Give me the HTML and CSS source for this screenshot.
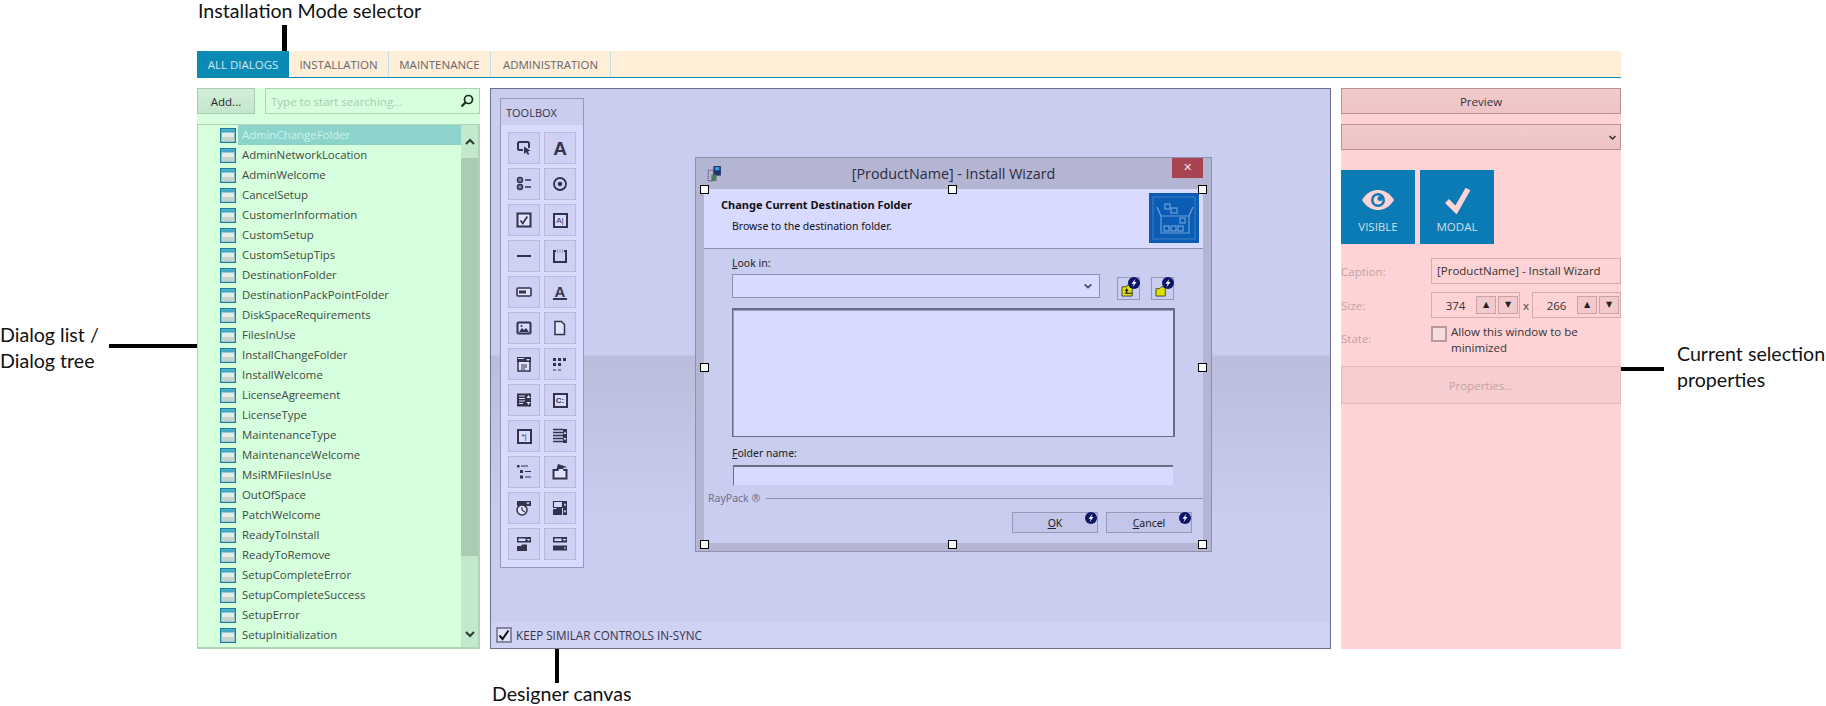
FILE: index.html
```html
<!DOCTYPE html>
<html lang="en">
<head>
<meta charset="utf-8">
<title>RayPack Dialog Designer</title>
<link rel="stylesheet" href="styles.css">
</head>
<body>
<svg class="sprite" width="0" height="0">
  <symbol id="dlg" viewBox="0 0 16 15"><rect x=".75" y=".75" width="14.5" height="13.5" fill="#e3ece6" stroke="#17809f" stroke-width="1.5"/><rect x="1.5" y="1.5" width="13" height="3" fill="#3fa7c6"/><rect x="1.5" y="9" width="13" height="4.5" fill="#c4d4cb"/></symbol>
  <symbol id="t1" viewBox="0 0 16 16"><path d="M13 8V3.500Q13 2 11.500 2h-8Q2 2 2 3.500v5Q2 10 3.500 10H7" fill="none" stroke="#33334d" stroke-width="2"/><path d="M8 6.500l6.500 4.300-2.700.8 1.500 2.700-1.500.8-1.500-2.800-2.300 1.800z" fill="#33334d"/></symbol>
  <symbol id="t3" viewBox="0 0 16 16"><circle cx="4" cy="4" r="2.500" fill="#8b8ba8" stroke="#33334d" stroke-width="1.500"/><circle cx="4" cy="11" r="2.500" fill="#8b8ba8" stroke="#33334d" stroke-width="1.500"/><path d="M9 4h6M9 11h6" stroke="#33334d" stroke-width="1.300"/></symbol>
  <symbol id="t4" viewBox="0 0 16 16"><circle cx="8" cy="8" r="6" fill="none" stroke="#33334d" stroke-width="1.800"/><circle cx="8" cy="8" r="2.300" fill="#33334d"/></symbol>
  <symbol id="t5" viewBox="0 0 16 16"><rect x="1.500" y="1.500" width="13" height="13" fill="#e3e4fb" stroke="#33334d" stroke-width="2"/><path d="M4.500 8.500l2.300 3 4.500-7" fill="none" stroke="#33334d" stroke-width="1.700"/></symbol>
  <symbol id="t7" viewBox="0 0 16 16"><path d="M1 8h14" stroke="#33334d" stroke-width="2"/></symbol>
  <symbol id="t8" viewBox="0 0 16 16"><path d="M4 3H2v11h12V3h-2" fill="none" stroke="#33334d" stroke-width="2"/><path d="M5 2h1M7.500 2h1M10 2h1M5 4h1M7.500 4h1M10 4h1" stroke="#66667f"/></symbol>
  <symbol id="t9" viewBox="0 0 16 16"><rect x="1" y="4" width="14" height="8" rx="1" fill="#e3e4fb" stroke="#33334d" stroke-width="1.600"/><rect x="3" y="6.500" width="7" height="3" fill="#33334d"/></symbol>
  <symbol id="t11" viewBox="0 0 16 16"><rect x="1.500" y="2.500" width="13" height="11" rx="1" fill="#d8daff" stroke="#33334d" stroke-width="2"/><path d="M3 12l3-4 2 2 2-2 3 4z" fill="#33334d"/><circle cx="5.500" cy="6" r="1" fill="#33334d"/></symbol>
  <symbol id="t12" viewBox="0 0 16 16"><path d="M3 1.500h6.500l3 3v10H3z" fill="#e3e4fb" stroke="#33334d" stroke-width="1.500"/></symbol>
  <symbol id="t13" viewBox="0 0 16 16"><path d="M1 1h14v5H1z" fill="#33334d"/><path d="M10 3h4l-2 2z" fill="#d8daff"/><path d="M2 2.500h6" stroke="#d8daff"/><path d="M2 6v9h12V6" fill="#e3e4fb" stroke="#33334d" stroke-width="1.500"/><path d="M5 9h6M5 11h6M5 13h4" stroke="#33334d"/></symbol>
  <symbol id="t14" viewBox="0 0 16 16"><path d="M1 2h3v3H1zM6 2h3v3H6zM11 2h3v3h-3zM1 7h3v3H1zM6 7h3v3H6z" fill="#33334d"/><path d="M1 14h3M6 14h3" stroke="#33334d"/></symbol>
  <symbol id="t15" viewBox="0 0 16 16"><rect x="1" y="1.500" width="14" height="13" fill="#33334d"/><path d="M3 4h6M3 6.500h6M3 9h6M3 11.500h4" stroke="#e3e4fb" stroke-width="1.200"/><path d="M10.500 6h4l-2-3zM10.500 10h4l-2 3z" fill="#e3e4fb"/></symbol>
  <symbol id="t18" viewBox="0 0 16 16"><path d="M1 1.500h10M1 4.500h10M1 7.500h10M1 10.500h10M1 13.500h10" stroke="#33334d" stroke-width="1.400"/><path d="M11 1h4v14h-4z" fill="#33334d"/><path d="M11.500 6h3L13 3.500zM11.500 10h3L13 12.500z" fill="#e3e4fb"/></symbol>
  <symbol id="t19" viewBox="0 0 16 16"><path d="M1 1h2.500v2.500H1zM4 6h3v3H4zM4 11.500h3v3H4z" fill="#33334d"/><path d="M5 2h7M9 7.500h6M9 13h6" stroke="#33334d" stroke-width="1.200"/></symbol>
  <symbol id="t20" viewBox="0 0 16 16"><path d="M1.500 6h13v8.500h-13z" fill="#e3e4fb" stroke="#33334d" stroke-width="2"/><path d="M6 0l9 3-4 1 1 3H4z" fill="#33334d"/><path d="M7 5L4.500 13h8L11 5z" fill="#e3e4fb"/></symbol>
  <symbol id="t21" viewBox="0 0 16 16"><rect x="1" y="1" width="14" height="5" fill="#33334d"/><path d="M10 2.500h4l-2 2z" fill="#d8daff"/><circle cx="6" cy="10" r="5" fill="#e3e4fb" stroke="#33334d" stroke-width="1.500"/><path d="M6 10V7M6 10l3 2" stroke="#33334d" stroke-width="1.200"/></symbol>
  <symbol id="t22" viewBox="0 0 16 16"><path d="M1.500 1.500h9v6h-9z" fill="#d8daff" stroke="#33334d" stroke-width="1.200"/><path d="M1 9h3l1-1.500h5V15H1z" fill="#33334d"/><rect x="11" y="1" width="4" height="14" fill="#33334d"/><path d="M11.700 5.500h2.600L13 3zM11.700 10.500h2.600L13 13z" fill="#e3e4fb"/></symbol>
  <symbol id="t23" viewBox="0 0 16 16"><rect x="1" y="1" width="14" height="5.500" fill="#33334d"/><rect x="2.500" y="2.500" width="7" height="2.500" fill="#d8daff"/><path d="M10.500 3h4l-2 2z" fill="#d8daff"/><path d="M1 10h4l1-1.500h5V15H1z" fill="#33334d"/></symbol>
  <symbol id="t24" viewBox="0 0 16 16"><rect x="1" y="1" width="14" height="5.500" fill="#33334d"/><rect x="2.500" y="2.500" width="7" height="2.500" fill="#d8daff"/><path d="M10.500 3h4l-2 2z" fill="#d8daff"/><rect x="1" y="9.500" width="14" height="5" fill="#33334d"/><path d="M12.500 11h1v2h-1z" fill="#d8daff"/></symbol>
  <symbol id="bolt" viewBox="0 0 12 12"><circle cx="6" cy="6" r="6" fill="#0c1468"/><path d="M7.500 1.800L3.500 6.800h2.200L4.500 10.300l4-5.300H6.300z" fill="#fff"/></symbol>
  <symbol id="chev" viewBox="0 0 12 12"><path d="M2 4l4 4 4-4" fill="none" stroke="currentColor" stroke-width="2"/></symbol>
</svg>

<div class="page">
  <nav class="tabs">
    <span class="tab tab-active">ALL DIALOGS</span>
    <span class="tab tab-install">INSTALLATION</span>
    <span class="tab tab-maint">MAINTENANCE</span>
    <span class="tab tab-admin">ADMINISTRATION</span>
  </nav>

  <main class="columns">
    <section class="left">
      <div class="left-top">
        <button class="add">Add...</button>
        <div class="search">
          <span class="search-ph">Type to start searching...</span>
          <svg class="search-ico" viewBox="0 0 14 14"><circle cx="8.500" cy="5.500" r="4" fill="none" stroke="#1c2a22" stroke-width="1.700"/><path d="M5.500 8.500L1.500 12.500" stroke="#1c2a22" stroke-width="2.200"/></svg>
        </div>
      </div>
      <div class="tree">
        <ul class="rows">
          <li class="row row-sel"><svg class="row-ico"><use href="#dlg"/></svg><span class="row-text">AdminChangeFolder</span></li>
          <li class="row"><svg class="row-ico"><use href="#dlg"/></svg><span class="row-text">AdminNetworkLocation</span></li>
          <li class="row"><svg class="row-ico"><use href="#dlg"/></svg><span class="row-text">AdminWelcome</span></li>
          <li class="row"><svg class="row-ico"><use href="#dlg"/></svg><span class="row-text">CancelSetup</span></li>
          <li class="row"><svg class="row-ico"><use href="#dlg"/></svg><span class="row-text">CustomerInformation</span></li>
          <li class="row"><svg class="row-ico"><use href="#dlg"/></svg><span class="row-text">CustomSetup</span></li>
          <li class="row"><svg class="row-ico"><use href="#dlg"/></svg><span class="row-text">CustomSetupTips</span></li>
          <li class="row"><svg class="row-ico"><use href="#dlg"/></svg><span class="row-text">DestinationFolder</span></li>
          <li class="row"><svg class="row-ico"><use href="#dlg"/></svg><span class="row-text">DestinationPackPointFolder</span></li>
          <li class="row"><svg class="row-ico"><use href="#dlg"/></svg><span class="row-text">DiskSpaceRequirements</span></li>
          <li class="row"><svg class="row-ico"><use href="#dlg"/></svg><span class="row-text">FilesInUse</span></li>
          <li class="row"><svg class="row-ico"><use href="#dlg"/></svg><span class="row-text">InstallChangeFolder</span></li>
          <li class="row"><svg class="row-ico"><use href="#dlg"/></svg><span class="row-text">InstallWelcome</span></li>
          <li class="row"><svg class="row-ico"><use href="#dlg"/></svg><span class="row-text">LicenseAgreement</span></li>
          <li class="row"><svg class="row-ico"><use href="#dlg"/></svg><span class="row-text">LicenseType</span></li>
          <li class="row"><svg class="row-ico"><use href="#dlg"/></svg><span class="row-text">MaintenanceType</span></li>
          <li class="row"><svg class="row-ico"><use href="#dlg"/></svg><span class="row-text">MaintenanceWelcome</span></li>
          <li class="row"><svg class="row-ico"><use href="#dlg"/></svg><span class="row-text">MsiRMFilesInUse</span></li>
          <li class="row"><svg class="row-ico"><use href="#dlg"/></svg><span class="row-text">OutOfSpace</span></li>
          <li class="row"><svg class="row-ico"><use href="#dlg"/></svg><span class="row-text">PatchWelcome</span></li>
          <li class="row"><svg class="row-ico"><use href="#dlg"/></svg><span class="row-text">ReadyToInstall</span></li>
          <li class="row"><svg class="row-ico"><use href="#dlg"/></svg><span class="row-text">ReadyToRemove</span></li>
          <li class="row"><svg class="row-ico"><use href="#dlg"/></svg><span class="row-text">SetupCompleteError</span></li>
          <li class="row"><svg class="row-ico"><use href="#dlg"/></svg><span class="row-text">SetupCompleteSuccess</span></li>
          <li class="row"><svg class="row-ico"><use href="#dlg"/></svg><span class="row-text">SetupError</span></li>
          <li class="row"><svg class="row-ico"><use href="#dlg"/></svg><span class="row-text">SetupInitialization</span></li>
        </ul>
        <div class="scrollbar">
          <div class="sb-btn"><svg class="sb-chev sb-up"><use href="#chev"/></svg></div>
          <div class="sb-thumb"></div>
          <div class="sb-rest"><svg class="sb-chev"><use href="#chev"/></svg></div>
        </div>
      </div>
    </section>

    <section class="canvas">
      <div class="canvas-main">
        <aside class="toolbox">
          <div class="toolbox-title">TOOLBOX</div>
          <div class="tools">
            <div class="tool"><svg class="tool-ico"><use href="#t1"/></svg></div>
            <div class="tool"><span class="glyph-a">A</span></div>
            <div class="tool"><svg class="tool-ico"><use href="#t3"/></svg></div>
            <div class="tool"><svg class="tool-ico"><use href="#t4"/></svg></div>
            <div class="tool"><svg class="tool-ico"><use href="#t5"/></svg></div>
            <div class="tool"><span class="glyph-box">A|</span></div>
            <div class="tool"><svg class="tool-ico"><use href="#t7"/></svg></div>
            <div class="tool"><svg class="tool-ico"><use href="#t8"/></svg></div>
            <div class="tool"><svg class="tool-ico"><use href="#t9"/></svg></div>
            <div class="tool"><span class="glyph-link">A</span></div>
            <div class="tool"><svg class="tool-ico"><use href="#t11"/></svg></div>
            <div class="tool"><svg class="tool-ico"><use href="#t12"/></svg></div>
            <div class="tool"><svg class="tool-ico"><use href="#t13"/></svg></div>
            <div class="tool"><svg class="tool-ico"><use href="#t14"/></svg></div>
            <div class="tool"><svg class="tool-ico"><use href="#t15"/></svg></div>
            <div class="tool"><span class="glyph-box glyph-bold">C:</span></div>
            <div class="tool"><span class="glyph-box">*|</span></div>
            <div class="tool"><svg class="tool-ico"><use href="#t18"/></svg></div>
            <div class="tool"><svg class="tool-ico"><use href="#t19"/></svg></div>
            <div class="tool"><svg class="tool-ico"><use href="#t20"/></svg></div>
            <div class="tool"><svg class="tool-ico"><use href="#t21"/></svg></div>
            <div class="tool"><svg class="tool-ico"><use href="#t22"/></svg></div>
            <div class="tool"><svg class="tool-ico"><use href="#t23"/></svg></div>
            <div class="tool"><svg class="tool-ico"><use href="#t24"/></svg></div>
          </div>
        </aside>

        <div class="dialog">
          <header class="dlg-title">
            <svg class="dlg-app" viewBox="0 0 16 16"><path d="M7 1h7v9H7z" fill="#22306a"/><path d="M8.500 2h4v3h-4z" fill="#27a3e6"/><path d="M2 5h5v10H2z" fill="none" stroke="#33334d" stroke-dasharray="1 1"/><path d="M5 9h5v6H5z" fill="#4d7a60"/></svg>
            <span class="dlg-caption">[ProductName] - Install Wizard</span>
            <span class="dlg-close">✕</span>
          </header>
          <div class="dlg-body">
            <div class="dlg-head">
              <div class="dlg-head-text">
                <div class="dlg-h1">Change Current Destination Folder</div>
                <div class="dlg-h2">Browse to the destination folder.</div>
              </div>
              <svg class="dlg-logo" viewBox="0 0 50 50">
                <rect width="50" height="50" fill="#0b5cb5"/>
                <rect x="4" y="4" width="42" height="42" fill="none" stroke="#3c7fc8"/>
                <g fill="none" stroke="#6f9fd8" stroke-width="1.200">
                  <path d="M8 14l4 9v17h28V23l4-9M12 23h28"/>
                  <rect x="16" y="11" width="5" height="5"/><rect x="22" y="15" width="6" height="5"/>
                  <rect x="31" y="25" width="5" height="5"/><rect x="15" y="33" width="5" height="5"/><rect x="22" y="33" width="5" height="5"/><rect x="29" y="33" width="5" height="5"/>
                </g>
              </svg>
            </div>
            <div class="dlg-form">
              <label class="dlg-label"><u>L</u>ook in:</label>
              <div class="look-row">
                <div class="dlg-combo"><svg class="dlg-chev"><use href="#chev"/></svg></div>
                <div class="dlg-icon-btn">
                  <svg class="folder" viewBox="0 0 16 14"><path d="M1 3h5l1-2h5v12H1z" fill="#dfe000" stroke="#222" stroke-width=".8"/><path d="M4 10h8M6 10V6M4.500 7.500L6 5.500l1.500 2" fill="none" stroke="#111" stroke-width="1.200"/></svg>
                  <svg class="bolt"><use href="#bolt"/></svg>
                </div>
                <div class="dlg-icon-btn">
                  <svg class="folder" viewBox="0 0 16 14"><path d="M1 5h4l2-2h4v10H1z" fill="#dfe000" stroke="#222" stroke-width=".8"/></svg>
                  <svg class="bolt"><use href="#bolt"/></svg>
                </div>
              </div>
              <div class="dlg-listbox"></div>
              <label class="dlg-label dlg-label-folder"><u>F</u>older name:</label>
              <div class="dlg-input"></div>
            </div>
            <div class="raypack"><span class="raypack-text">RayPack ®</span><span class="raypack-line"></span></div>
            <div class="dlg-actions">
              <div class="dlg-btn"><span><u>O</u>K</span><svg class="bolt bolt-btn"><use href="#bolt"/></svg></div>
              <div class="dlg-btn"><span><u>C</u>ancel</span><svg class="bolt bolt-btn"><use href="#bolt"/></svg></div>
            </div>
          </div>
          <i class="handle h-tl"></i><i class="handle h-tc"></i><i class="handle h-tr"></i>
          <i class="handle h-ml"></i><i class="handle h-mr"></i>
          <i class="handle h-bl"></i><i class="handle h-bc"></i><i class="handle h-br"></i>
        </div>
      </div>
      <div class="sync">
        <span class="sync-check"><svg viewBox="0 0 12 12"><path d="M1.500 6.500l3 3.500 6-8.500" fill="none" stroke="#111" stroke-width="2"/></svg></span>
        <span class="sync-text">KEEP SIMILAR CONTROLS IN-SYNC</span>
      </div>
    </section>

    <section class="right">
      <button class="preview">Preview</button>
      <div class="right-select"><svg class="right-chev"><use href="#chev"/></svg></div>
      <div class="tiles">
        <div class="tile">
          <svg class="tile-ico" viewBox="0 0 34 24"><path d="M1 12C6 4 12 2 17 2s11 2 16 10c-5 8-11 10-16 10S6 20 1 12z" fill="#ffd3d5"/><circle cx="17" cy="12" r="7" fill="#0a7bb4"/><circle cx="17" cy="12" r="4.500" fill="#ffd3d5"/><circle cx="19" cy="10.500" r="2.500" fill="#0a7bb4"/></svg>
          <span class="tile-text">VISIBLE</span>
        </div>
        <div class="tile">
          <svg class="tile-ico" viewBox="0 0 34 28"><path d="M7 15l9 9L28 3" fill="none" stroke="#ffd3d5" stroke-width="5.500"/></svg>
          <span class="tile-text">MODAL</span>
        </div>
      </div>
      <div class="props">
        <span class="prop-label">Caption:</span>
        <div class="prop-input">[ProductName] - Install Wizard</div>
        <span class="prop-label">Size:</span>
        <div class="size-row">
          <div class="spin"><span class="spin-val">374</span><span class="spin-btn">▲</span><span class="spin-btn">▼</span></div>
          <span class="size-x">x</span>
          <div class="spin"><span class="spin-val">266</span><span class="spin-btn">▲</span><span class="spin-btn">▼</span></div>
        </div>
        <span class="prop-label prop-label-state">State:</span>
        <div class="state">
          <span class="state-box"></span>
          <span class="state-text">Allow this window to be minimized</span>
        </div>
      </div>
      <button class="properties">Properties...</button>
    </section>
  </main>

  <div class="note note-top">Installation Mode selector</div>
  <i class="bar bar-top"></i>
  <div class="note note-left">Dialog list /<br>Dialog tree</div>
  <i class="bar bar-left"></i>
  <div class="note note-right">Current selection<br>properties</div>
  <i class="bar bar-right"></i>
  <div class="note note-bottom">Designer canvas</div>
  <i class="bar bar-bottom"></i>
</div>
</body>
</html>
```
FILE: styles.css
```css
* { box-sizing: border-box; }
html, body { margin: 0; padding: 0; background: #fff; }
body { font-family: "Open Sans", "Liberation Sans", sans-serif; font-size: 11.5px; color: #333; }
.sprite { position: absolute; }
.page { position: relative; width: 1826px; height: 706px; overflow: hidden; padding: 51px 205px 0 197px; }

/* tabs */
.tabs { display: flex; height: 27px; background: #ffeed8; border-bottom: 1px solid #0a8ab5; }
.tab { display: flex; align-items: center; justify-content: center; color: #66666a; font-size: 11.5px; border-right: 1px solid #c6dde0; }
.tab-active { width: 92px; background: #0a8ab5; color: #cfe8f2; border-right: 0; }
.tab-install { width: 100px; }
.tab-maint { width: 102px; }
.tab-admin { width: 120px; }

.columns { display: flex; gap: 10px; margin-top: 10px; height: 561px; }

/* left */
.left { width: 283px; display: flex; flex-direction: column; background: #d5ffdd; }
.left-top { display: flex; gap: 10px; height: 26px; flex: none; }
.add { width: 58px; height: 26px; padding: 0; border: 1px solid #a8ccb0; background: linear-gradient(#d3eeda, #c4e6cc); font: inherit; color: #2a2a2a; }
.search { flex: 1; display: flex; align-items: center; justify-content: space-between; padding: 0 5px; border: 1px solid #aed2b7; }
.search-ph { color: #aacab3; }
.search-ico { width: 14px; height: 14px; }
.tree { display: flex; margin-top: 10px; height: 525px; border: 1px solid #aed5b6; border-width: 1px 2px 2px 1px; }
.rows { list-style: none; margin: 0; padding: 0; flex: 1; overflow: hidden; }
.row { display: flex; align-items: center; height: 20px; padding-left: 22px; color: #3d4a42; font-size: 11.4px; }
.row-ico { width: 16px; height: 15px; flex: none; }
.row-text { flex: 1; height: 20px; line-height: 20px; margin-left: 2px; padding-left: 4px; }
.row-sel .row-text { background: #8cd3cb; color: #cdf3ea; }
.scrollbar { width: 17px; display: flex; flex-direction: column; background: #c3e8cc; }
.sb-btn { height: 33px; display: flex; align-items: center; justify-content: center; }
.sb-thumb { height: 398px; background: #abcbb2; }
.sb-rest { flex: 1; display: flex; align-items: flex-end; justify-content: center; padding-bottom: 7px; }
.sb-chev { width: 12px; height: 12px; color: #2a3a30; }
.sb-up { transform: rotate(180deg); }

/* canvas */
.canvas { width: 841px; display: flex; flex-direction: column; border: 1px solid #6f6f8a; background: linear-gradient(#c9cdef 0, #c9cdef 266px, #babddc 267px, #c9cdef 430px); }
.canvas-main { flex: 1; display: flex; align-items: flex-start; padding: 9px 0 0 9px; }
.sync { display: flex; align-items: center; gap: 4px; height: 26px; padding-left: 5px; background: #cfd2f3; }
.sync-check { width: 16px; height: 16px; border: 2px solid #85869f; background: #e2e3fb; display: flex; }
.sync-check svg { width: 12px; height: 12px; }
.sync-text { color: #33334d; font-size: 11.7px; }

.toolbox { width: 84px; height: 470px; border: 1px solid #9698b4; background: #d8daff; }
.toolbox-title { height: 26px; line-height: 27px; padding-left: 5px; background: #cacdee; color: #33334d; font-size: 11px; }
.tools { display: grid; grid-template-columns: 32px 32px; gap: 4px; padding: 7px 0 0 7px; }
.tool { width: 32px; height: 32px; border: 1px solid #b8bad8; display: flex; align-items: center; justify-content: center; background: #ced1f4; }
.tool-ico { width: 16px; height: 16px; }
.glyph-a { font: bold 19px/1 "Liberation Sans", sans-serif; color: #33334d; }
.glyph-link { font: bold 15px/13px "Liberation Sans", sans-serif; color: #33334d; border-bottom: 2px solid #33334d; padding: 0 2px; }
.glyph-box { width: 15px; height: 15px; border: 2px solid #33334d; background: #d8daff; font: 8px/11px "Liberation Sans", sans-serif; text-align: center; color: #33334d; }
.glyph-bold { font-weight: 700; }

/* dialog */
.dialog { position: relative; width: 517px; height: 395px; margin: 59px 0 0 111px; border: 1px solid #8e90ad; background: #b3b5d2; padding: 0 8px 8px; display: flex; flex-direction: column; font-family: "Noto Sans", sans-serif; color: #111; }
.dlg-title { position: relative; height: 31px; flex: none; margin: 0 -8px; display: flex; justify-content: center; padding-top: 5px; }
.dlg-app { position: absolute; left: 10px; top: 7px; width: 17px; height: 17px; }
.dlg-caption { font: 14.3px/22px "Open Sans", sans-serif; color: #2b2b3f; }
.dlg-close { position: absolute; right: 8px; top: 0; width: 31px; height: 20px; background: #a84452; color: #f3dfe4; font: 11px/20px "DejaVu Sans", sans-serif; text-align: center; }
.dlg-body { flex: 1; background: #c9cdef; display: flex; flex-direction: column; min-height: 0; }
.dlg-head { height: 60px; flex: none; display: flex; justify-content: space-between; align-items: center; background: #d8daff; border-bottom: 1px solid #8e90ad; padding: 0 4px 1px 17px; }
.dlg-head-text { margin-top: -5px; }
.dlg-h1 { font-weight: 700; font-size: 11px; line-height: 15px; }
.dlg-h2 { font-size: 10.5px; line-height: 15px; padding: 7px 0 0 11px; }
.dlg-logo { width: 50px; height: 50px; }
.dlg-form { padding: 6px 29px 0 28px; flex: none; }
.dlg-label { display: block; font-size: 10.5px; line-height: 16px; color: #222; }
.look-row { display: flex; align-items: flex-start; margin-top: 3px; }
.dlg-combo { width: 369px; height: 24px; background: #d8daff; border: 1px solid #8e90ad; display: flex; align-items: center; justify-content: flex-end; padding-right: 6px; }
.dlg-chev { width: 10px; height: 10px; color: #4a4a60; }
.dlg-icon-btn { position: relative; width: 23px; height: 23px; margin: 3px 0 0 17px; border: 1px solid #9698b4; display: flex; align-items: flex-end; padding: 0 0 2px 3px; }
.dlg-icon-btn + .dlg-icon-btn { margin-left: 11px; }
.folder { width: 15px; height: 13px; }
.bolt { position: absolute; right: -1px; top: -1px; width: 12px; height: 12px; }
.dlg-listbox { width: 443px; height: 129px; margin-top: 8px; background: #d8daff; border: 2px solid #6b6b85; border-width: 2px 2px 1px 1px; box-shadow: inset 1px 1px 0 #9c9db9; }
.dlg-label-folder { margin-top: 8px; }
.dlg-input { width: 440px; height: 20px; margin: 4px 0 0 1px; background: #d8daff; border: 2px solid #6d6d85; border-width: 2px 0 0 1px; }
.raypack { display: flex; align-items: center; gap: 6px; margin-top: 4px; padding-left: 4px; flex: none; }
.raypack-text { color: #70708a; font-size: 10.5px; line-height: 18px; }
.raypack-line { flex: 1; height: 1px; background: #8e90ad; }
.dlg-actions { display: flex; justify-content: flex-end; gap: 8px; padding: 5px 11px 0 0; flex: none; }
.dlg-btn { position: relative; width: 86px; height: 21px; border: 1px solid #9698b4; background: #c3c6ea; font-size: 10.5px; display: flex; align-items: center; justify-content: center; color: #222; }
.bolt-btn { right: 0; top: -1px; }
.handle { position: absolute; width: 9px; height: 9px; background: #fff; border: 1px solid #000; }
.h-tl { left: 4px; top: 27px; }
.h-tc { left: 252px; top: 27px; }
.h-tr { left: 502px; top: 27px; }
.h-ml { left: 4px; top: 205px; }
.h-mr { left: 502px; top: 205px; }
.h-bl { left: 4px; top: 382px; }
.h-bc { left: 252px; top: 382px; }
.h-br { left: 502px; top: 382px; }

/* right */
.right { width: 280px; display: flex; flex-direction: column; background: #ffd3d5; }
.preview { height: 26px; flex: none; padding: 0; border: 1px solid #b99295; background: linear-gradient(#f2cbcd, #eec4c6); font: inherit; color: #333; }
.right-select { height: 26px; flex: none; margin-top: 10px; border: 1px solid #b99295; background: linear-gradient(#f2cbcd, #eec4c6); display: flex; align-items: center; justify-content: flex-end; padding-right: 3px; }
.right-chev { width: 9px; height: 9px; color: #3a2a2c; }
.tiles { display: flex; gap: 5px; margin-top: 20px; flex: none; }
.tile { width: 74px; height: 74px; background: #0a7bb4; display: flex; flex-direction: column; align-items: center; justify-content: flex-end; padding-bottom: 9px; }
.tile-ico { width: 34px; height: 28px; margin-bottom: 5px; }
.tile-text { color: #d5dfe8; font-size: 11.5px; line-height: 16px; }
.props { display: grid; grid-template-columns: 90px 190px; row-gap: 8px; margin-top: 14px; align-items: center; flex: none; }
.prop-label { color: #bda3a5; }
.prop-label-state { align-self: start; line-height: 26px; }
.prop-input { height: 26px; line-height: 24px; padding-left: 5px; border: 1px solid #d3aeb0; color: #333; white-space: nowrap; }
.size-row { display: flex; align-items: center; justify-content: space-between; height: 26px; }
.spin { width: 89px; height: 26px; display: flex; align-items: center; border: 1px solid #d3aeb0; padding-right: 1px; gap: 2px; }
.spin-val { flex: 1; text-align: center; padding-left: 5px; }
.spin-btn { width: 20px; height: 18px; border: 1px solid #c9a3a5; background: #f4c9cb; color: #222; font: 8px/16px "DejaVu Sans", sans-serif; text-align: center; }
.size-x { color: #444; }
.state { display: flex; gap: 4px; height: 32px; }
.state-box { width: 16px; height: 16px; flex: none; border: 2px solid #b79a9c; background: #f8dcde; }
.state-text { line-height: 16px; width: 160px; margin-top: -2px; color: #333; }
.properties { height: 38px; flex: none; margin-top: 8px; padding: 0; border: 1px solid #e3b9bb; background: #f8cdcf; font: inherit; color: #bda3a5; }

/* annotations */
.note { position: absolute; font-family: "Lato", sans-serif; font-size: 19.6px; line-height: 25.5px; color: #111; white-space: nowrap; }
.note-top { left: 198px; top: 0; line-height: 22px; }
.note-left { left: 0; top: 322px; }
.note-right { left: 1677px; top: 341px; }
.note-bottom { left: 492px; top: 681px; }
.bar { position: absolute; background: #000; }
.bar-top { left: 282px; top: 25px; width: 5px; height: 26px; }
.bar-left { left: 109px; top: 344px; width: 88px; height: 4px; }
.bar-right { left: 1621px; top: 367px; width: 43px; height: 4px; }
.bar-bottom { left: 555px; top: 649px; width: 4px; height: 34px; }
```
